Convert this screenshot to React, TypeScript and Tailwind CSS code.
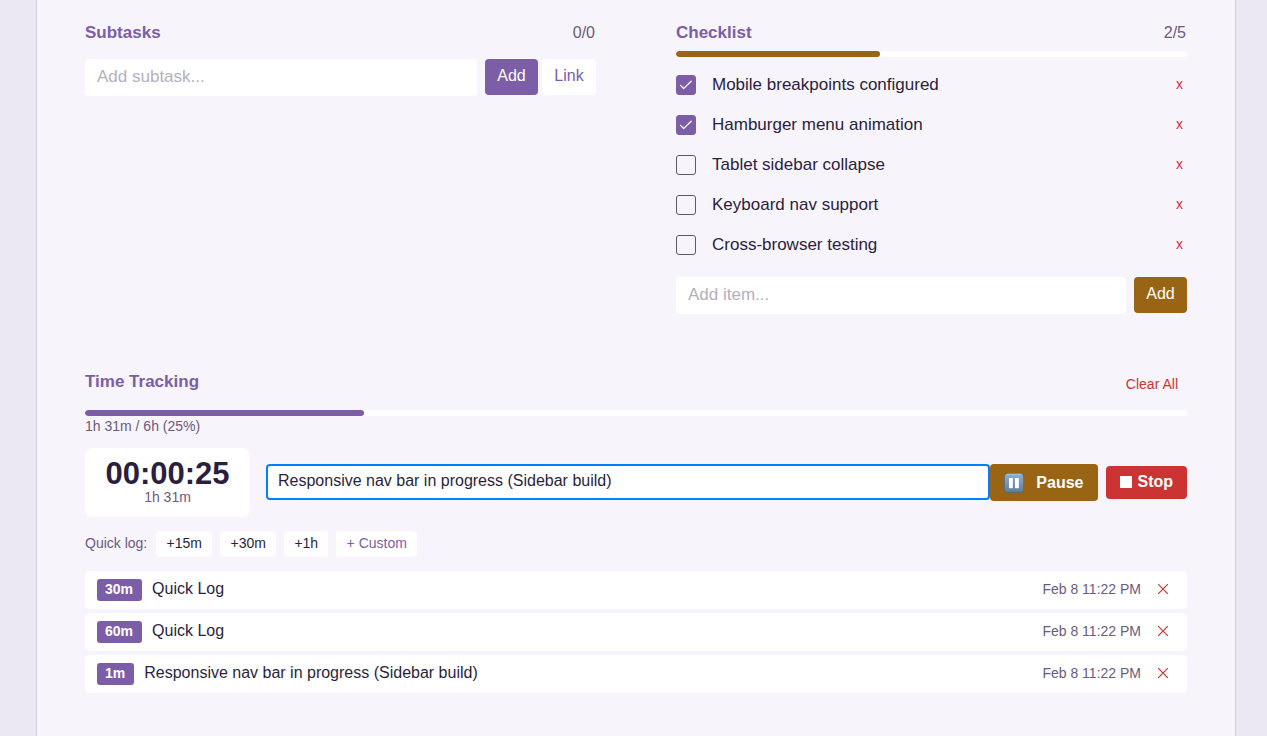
import { useState } from "react";

type Item = { id: string; label: string; done: boolean };
type Entry = { id: number; duration: string; note: string; when: string };

const initialItems: Item[] = [
  { id: "breakpoints", label: "Mobile breakpoints configured", done: true },
  { id: "hamburger", label: "Hamburger menu animation", done: true },
  { id: "sidebar", label: "Tablet sidebar collapse", done: false },
  { id: "keyboard", label: "Keyboard nav support", done: false },
  { id: "browsers", label: "Cross-browser testing", done: false },
];

const entries: Entry[] = [
  { id: 1, duration: "30m", note: "Quick Log", when: "Feb 8 11:22 PM" },
  { id: 2, duration: "60m", note: "Quick Log", when: "Feb 8 11:22 PM" },
  { id: 3, duration: "1m", note: "Responsive nav bar in progress (Sidebar build)", when: "Feb 8 11:22 PM" },
];

function ProgressBar({ percent, color, label }: { percent: number; color: string; label: string }) {
  return (
    <div
      role="progressbar"
      aria-label={label}
      aria-valuenow={Math.round(percent)}
      className="h-1.5 overflow-hidden rounded-full bg-white"
    >
      <div className={`h-full rounded-full ${color}`} style={{ width: `${percent}%` }} />
    </div>
  );
}

function Subtasks() {
  return (
    <section>
      <div className="flex h-5 items-center justify-between">
        <h2 className="text-[17px] font-bold text-[#7b5ea7]">Subtasks</h2>
        <span className="pr-px text-base text-[#6b5b7e]">0/0</span>
      </div>
      <div className="mt-4 flex items-start">
        <input
          aria-label="Add subtask"
          placeholder="Add subtask..."
          className="h-[37px] min-w-0 flex-1 rounded bg-white px-3 pb-0.5 text-[17px] outline-none placeholder:text-[#b5afbf]"
        />
        <button className="ml-2 h-9 min-w-[53px] rounded bg-[#7b5ea7] pb-0.5 text-base text-white">Add</button>
        <button className="ml-1 h-9 min-w-[54px] rounded bg-white pb-0.5 text-base text-[#7b5ea7]">Link</button>
      </div>
    </section>
  );
}

function Checklist() {
  const [items, setItems] = useState(initialItems);
  const done = items.filter((item) => item.done).length;
  const toggle = (id: string) =>
    setItems(items.map((item) => (item.id === id ? { ...item, done: !item.done } : item)));

  return (
    <section>
      <div className="mb-2 flex h-5 items-center justify-between">
        <h2 className="text-[17px] font-bold text-[#7b5ea7]">Checklist</h2>
        <span className="pr-px text-base text-[#6b5b7e]">
          {done}/{items.length}
        </span>
      </div>
      <ProgressBar percent={(done / Math.max(items.length, 1)) * 100} color="bg-[#996515]" label="Checklist progress" />
      <ul className="mt-2">
        {items.map((item) => (
          <li key={item.id} className="flex h-10 items-center">
            <span className="grid size-5 shrink-0">
              <input
                id={item.id}
                type="checkbox"
                checked={item.done}
                onChange={() => toggle(item.id)}
                className="peer col-start-1 row-start-1 size-5 appearance-none rounded-[3px] border border-[#5c5866] checked:border-[#7b5ea7] checked:bg-[#7b5ea7]"
              />
              <svg
                viewBox="0 0 20 20"
                className="pointer-events-none invisible col-start-1 row-start-1 size-5 peer-checked:visible"
                fill="none"
                stroke="white"
                strokeWidth="1.2"
                strokeLinecap="round"
                strokeLinejoin="round"
              >
                <path d="M4.6 10.4 7.6 13.5 15.2 6.2" />
              </svg>
            </span>
            <label htmlFor={item.id} className="ml-4 flex-1 text-[17px] leading-5 text-[#2a1f3d]">
              {item.label}
            </label>
            <button
              aria-label={`Remove ${item.label}`}
              className="px-1 pb-0.5 text-sm text-[#cc3333]"
              onClick={() => setItems(items.filter((other) => other.id !== item.id))}
            >
              x
            </button>
          </li>
        ))}
      </ul>
      <div className="mt-3 flex items-start gap-2">
        <input
          aria-label="Add item"
          placeholder="Add item..."
          className="h-[37px] min-w-0 flex-1 rounded bg-white px-3 pb-0.5 text-[17px] outline-none placeholder:text-[#b5afbf]"
        />
        <button className="h-9 min-w-[53px] rounded bg-[#996515] pb-0.5 text-base text-white">Add</button>
      </div>
    </section>
  );
}

function PauseIcon() {
  return (
    <svg viewBox="0 0 20 20" className="size-5" aria-hidden="true">
      <defs>
        <linearGradient id="pause-face" x1="0" y1="0" x2="0" y2="1">
          <stop offset="0" stopColor="#8fb0cc" />
          <stop offset="0.5" stopColor="#7799b8" />
          <stop offset="1" stopColor="#5d7f9f" />
        </linearGradient>
      </defs>
      <rect x="0.2" y="0.2" width="19.6" height="19.6" rx="3.4" fill="#4d6880" />
      <rect x="0.8" y="0.7" width="18.4" height="18.2" rx="2.9" fill="url(#pause-face)" />
      <path d="M3 1.3h14" stroke="#b4cbdd" strokeWidth="0.8" strokeLinecap="round" />
      <rect x="5" y="5" width="3.8" height="10.2" fill="white" />
      <rect x="11" y="5" width="3.8" height="10.2" fill="white" />
    </svg>
  );
}

function TimeTracking() {
  return (
    <section className="mt-14">
      <div className="flex h-10 items-start justify-between">
        <h2 className="pt-0.5 text-[17px] leading-5 font-bold text-[#7b5ea7]">Time Tracking</h2>
        <button className="px-[9px] pt-1 text-sm leading-5 text-[#cc3333]">Clear All</button>
      </div>
      <ProgressBar percent={25.3} color="bg-[#7b5ea7]" label="Time tracked" />
      <p className="text-sm leading-5 text-[#6b5b7e]">1h 31m / 6h (25%)</p>

      <div className="mt-3 flex items-center">
        <div className="flex h-[69px] min-w-[165px] flex-col items-center rounded-lg bg-white px-5 pt-2.5 text-center">
          <div className="text-[31px] leading-8 font-bold text-[#2a1f3d]">00:00:25</div>
          <div className="text-sm leading-[14px] text-[#6b5b7e]">1h 31m</div>
        </div>
        <div className="ml-4 flex min-w-0 flex-1 pb-px">
          <input
            aria-label="What are you working on?"
            defaultValue="Responsive nav bar in progress (Sidebar build)"
            className="h-9 min-w-0 flex-1 rounded border-2 border-[#007fff] bg-white px-2.5 pb-0.5 text-base text-[#2a1f3d] outline-none"
          />
        </div>
        <button className="flex h-[37px] items-center gap-3 rounded bg-[#996515] pr-[15px] pl-3.5 text-base font-bold text-white">
          <PauseIcon />
          Pause
        </button>
        <button className="ml-2 flex h-[33px] items-center gap-[5px] rounded bg-[#cc3333] px-3.5 pb-0.5 text-base font-bold text-white">
          <span className="size-3 bg-white" />
          Stop
        </button>
      </div>

      <div className="mt-3.5 flex items-center gap-2 text-sm">
        <span className="mr-px pb-0.5 text-[#6b5b7e]">Quick log:</span>
        <button className="h-[26px] min-w-14 rounded bg-white pb-0.5 text-[#2a1f3d]">+15m</button>
        <button className="h-[26px] min-w-14 rounded bg-white pb-0.5 text-[#2a1f3d]">+30m</button>
        <button className="h-[26px] min-w-11 rounded bg-white pb-0.5 text-[#2a1f3d]">+1h</button>
        <button className="h-[26px] min-w-[81px] rounded bg-white pb-0.5 text-[#7b5ea7]">+ Custom</button>
      </div>

      <ul className="mt-3.5 flex flex-col gap-1">
        {entries.map((entry) => (
          <li key={entry.id} className="flex h-[38px] items-center rounded bg-white px-3">
            <span className="flex h-[22px] items-center rounded-[3px] bg-[#7b5ea7] pr-[9px] pb-0.5 pl-2 text-sm font-bold text-white">
              {entry.duration}
            </span>
            <span className="ml-2.5 flex-1 pb-0.5 text-base text-[#2a1f3d]">{entry.note}</span>
            <span className="pb-0.5 text-sm text-[#6b5b7e]">{entry.when}</span>
            <button aria-label={`Delete ${entry.duration} entry`} className="ml-4 pr-1.5 pb-0.5">
              <svg viewBox="0 0 12 12" className="size-3" fill="none" stroke="#cc3333" strokeWidth="1.2">
                <path d="M1.2 1.2 10.8 10.8M10.8 1.2 1.2 10.8" />
              </svg>
            </button>
          </li>
        ))}
      </ul>
    </section>
  );
}

export default function App() {
  return (
    <div className="min-h-screen bg-[#ebe8f3] pr-[31px] pl-9 font-['Liberation_Sans',Arial,sans-serif]">
      <main className="mx-auto min-h-screen max-w-[1200px] border-x border-[#d4cee4] bg-[#f7f4fb] px-12 pt-[23px]">
        <div className="grid grid-cols-2 gap-20">
          <Subtasks />
          <Checklist />
        </div>
        <TimeTracking />
      </main>
    </div>
  );
}
